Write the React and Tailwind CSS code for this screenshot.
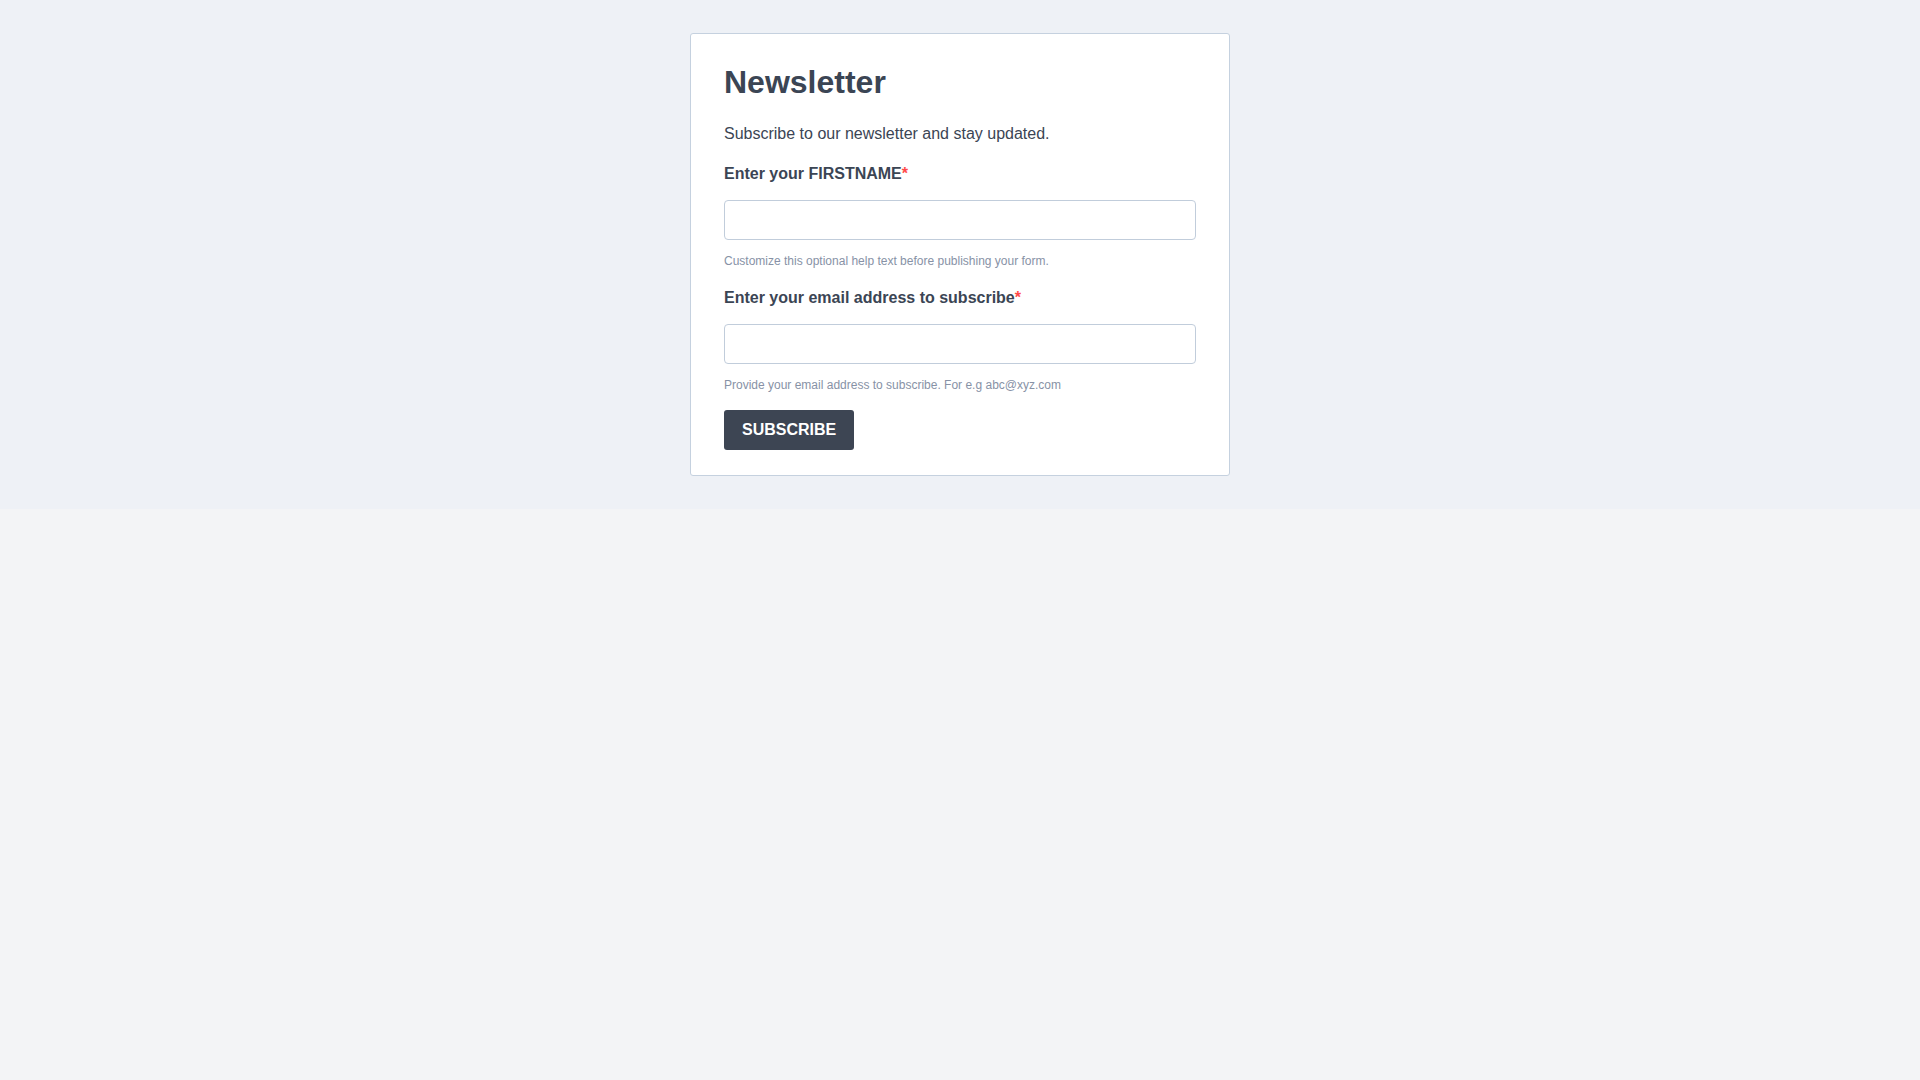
import React from 'react';

const FIELDS = [
  {
    id: 'firstname',
    label: 'Enter your FIRSTNAME',
    type: 'text',
    help: 'Customize this optional help text before publishing your form.',
  },
  {
    id: 'email',
    label: 'Enter your email address to subscribe',
    type: 'email',
    help: 'Provide your email address to subscribe. For e.g abc@xyz.com',
  },
];

const Field = ({ field }) => (
  <div className="mt-4">
    <label htmlFor={field.id} className="block text-[16px] leading-[24px] font-bold text-[#3b4554]">
      {field.label}
      <span className="text-[#ff4949]">*</span>
    </label>
    <input
      id={field.id}
      type={field.type}
      className="mt-[14px] block w-full h-10 rounded-[4px] border border-[#c1cddb] bg-white px-3 text-[16px] text-[#3b4554] outline-none"
    />
    <p className="mt-3 text-[12px] leading-[18px] text-[#8792a6]">{field.help}</p>
  </div>
);

export default function App() {
  return (
    <div className="min-h-screen bg-[#f3f4f6] font-['Liberation_Sans',Arial,sans-serif]">
      <div className="flex justify-center bg-[#eef1f6] pt-[33px] pb-[33px]">
        <div className="w-[540px] rounded-[3px] border border-[#c5d1df] bg-white px-[33px] pt-6 pb-[25px]">
          <h1 className="text-[32px] leading-[48px] font-bold text-[#3b4554]">Newsletter</h1>
          <p className="mt-4 text-[16px] leading-[24px] text-[#3b4554]">
            Subscribe to our newsletter and stay updated.
          </p>
          {FIELDS.map((f) => (
            <Field key={f.id} field={f} />
          ))}
          <button
            type="submit"
            className="mt-4 h-10 rounded-[3px] bg-[#3d4553] px-[18px] text-[16px] font-bold text-white"
          >
            SUBSCRIBE
          </button>
        </div>
      </div>
    </div>
  );
}
